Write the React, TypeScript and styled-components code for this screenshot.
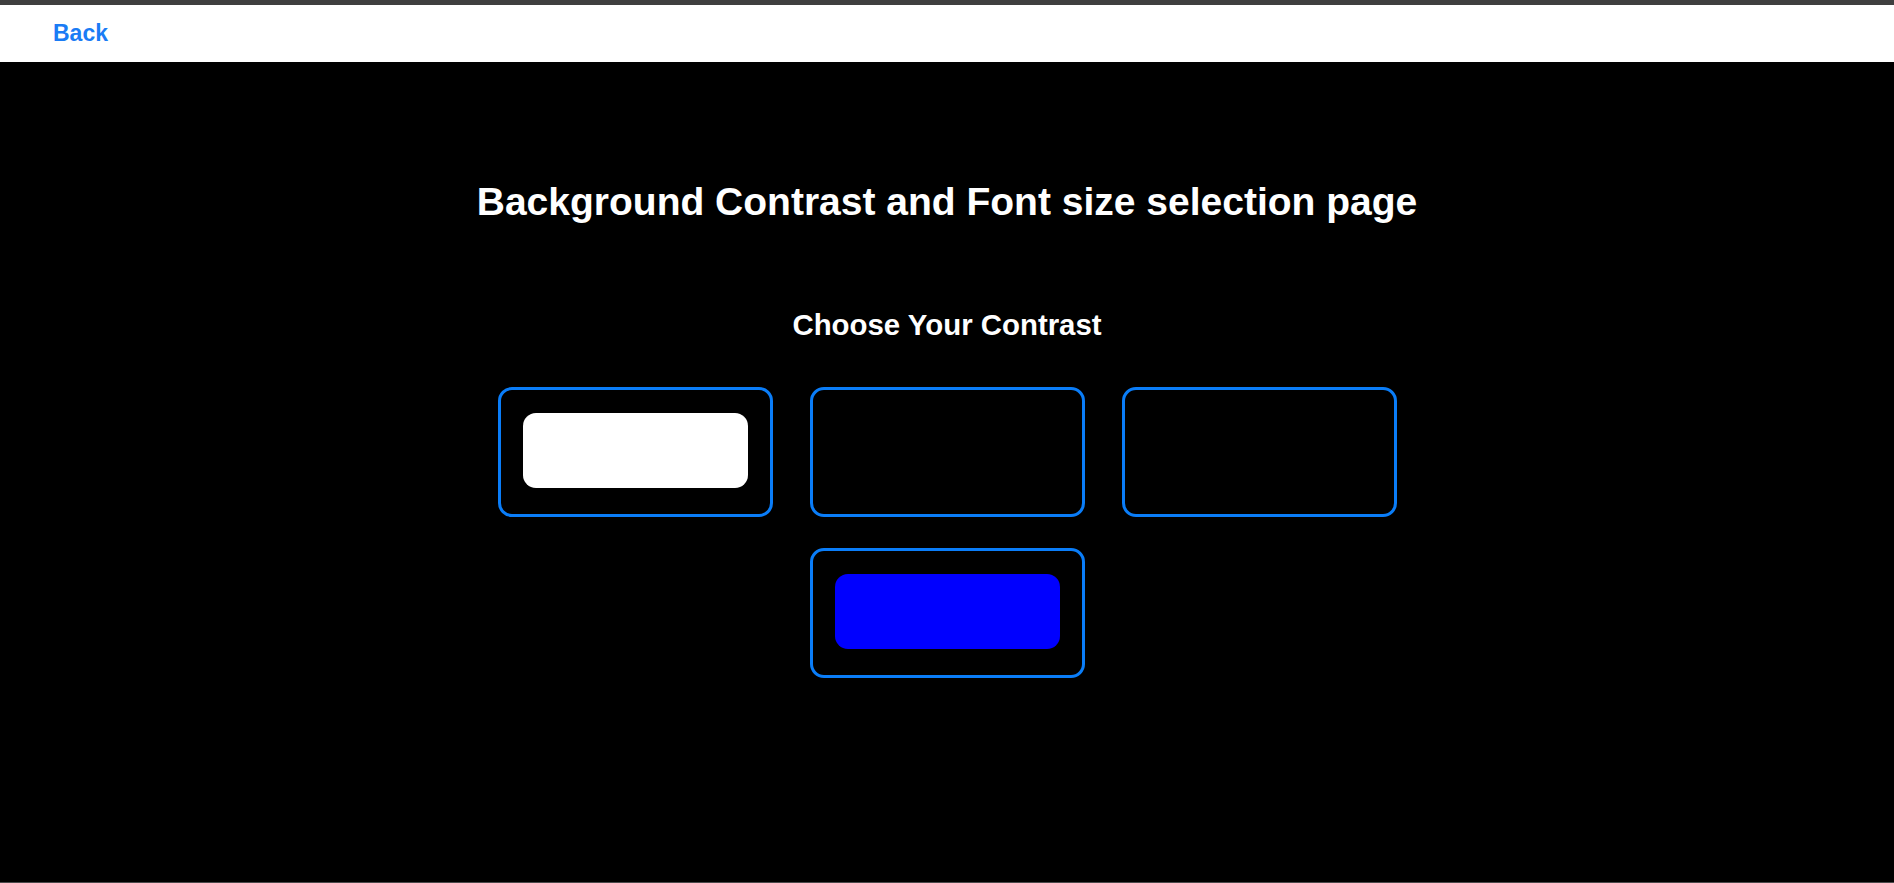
import styled, { createGlobalStyle } from "styled-components";

const GlobalStyle = createGlobalStyle`
	html, body {
		margin: 0;
		padding: 0;
		background: #000;
		font-family: "Liberation Sans", Arial, sans-serif;
	}
`;

const Page = styled.div`
	display: flex;
	flex-direction: column;
	min-height: 883px;
	border-top: 5px solid #3f3f3f;
	border-bottom: 1px solid #4a4a4a;
	box-sizing: border-box;
`;

const Header = styled.header`
	display: flex;
	align-items: center;
	height: 57px;
	padding-left: 53px;
	background: #fff;
`;

const BackLink = styled.a`
	font-size: 23px;
	font-weight: 700;
	color: #1a7cf5;
	text-decoration: none;
	cursor: pointer;
`;

const Main = styled.main`
	flex: 1;
	display: flex;
	flex-direction: column;
	align-items: center;
	padding-top: 118px;
	background: #000;
`;

const Title = styled.h1`
	margin: 0;
	font-size: 39px;
	font-weight: 700;
	color: #fff;
`;

const SubTitle = styled.h2`
	margin: 84px 0 0;
	font-size: 29.4px;
	font-weight: 700;
	color: #fff;
`;

const Options = styled.div`
	display: flex;
	flex-wrap: wrap;
	justify-content: center;
	column-gap: 37px;
	row-gap: 31px;
	width: 899px;
	margin-top: 45px;
`;

const Option = styled.button`
	display: flex;
	justify-content: center;
	align-items: flex-start;
	width: 275px;
	height: 130px;
	padding: 23px 22px 22px;
	box-sizing: border-box;
	background: #000;
	border: 3px solid #0a7df8;
	border-radius: 14px;
	cursor: pointer;
`;

const Swatch = styled.div<{ $color: string }>`
	width: 225px;
	height: 75px;
	border-radius: 13px;
	background: ${(p) => p.$color};
`;

const contrasts = ["#ffffff", "#000000", "#000000", "#0000ff"];

function App() {
	return (
		<>
			<GlobalStyle />
			<Page>
				<Header>
					<BackLink>Back</BackLink>
				</Header>
				<Main>
					<Title>Background Contrast and Font size selection page</Title>
					<SubTitle>Choose Your Contrast</SubTitle>
					<Options>
						{contrasts.map((c, i) => (
							<Option key={i}>
								<Swatch $color={c} />
							</Option>
						))}
					</Options>
				</Main>
			</Page>
		</>
	);
}

export default App;
